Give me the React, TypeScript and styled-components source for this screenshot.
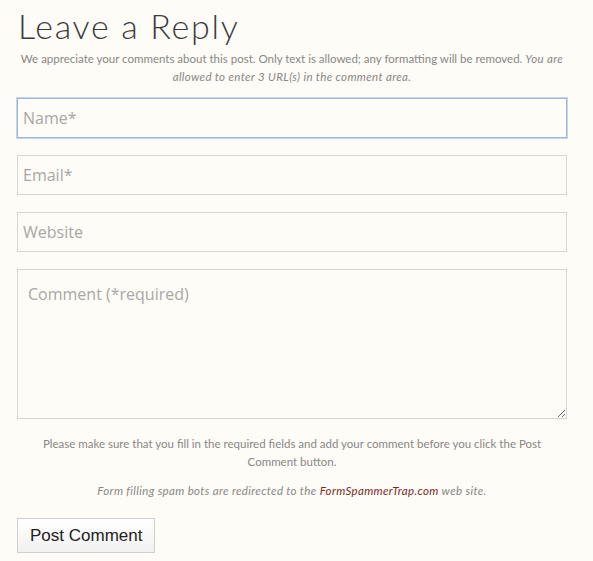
import React from "react";
import styled, { createGlobalStyle } from "styled-components";

const Global = createGlobalStyle`
  html, body { margin: 0; padding: 0; background: #fdfcf7; }
  body { font-family: Lato, "Open Sans", sans-serif; }
`;

const Wrap = styled.div`
  width: 550px;
  padding: 6px 0 0 17px;
  display: flex;
  flex-direction: column;
`;

const Title = styled.h3`
  margin: 0 0 0 1px;
  font-family: Lato, sans-serif;
  font-weight: 300;
  font-size: 34px;
  line-height: 40px;
  color: #3d3a3c;
  letter-spacing: 1.7px;
`;

const Note = styled.p<{ $mt?: number }>`
  margin: ${(p) => p.$mt ?? 0}px 0 0;
  font-family: Lato, sans-serif;
  font-size: 11.5px;
  line-height: 18px;
  color: #8a8784;
  text-align: center;
`;

const Em = styled.em`
  font-style: italic;
  letter-spacing: 0.35px;
`;

const Link = styled.a`
  color: #7a2b1f;
  text-decoration: none;
`;

const Fields = styled.div`
  display: flex;
  flex-direction: column;
  gap: 17px;
  margin-top: 12px;
`;

const Input = styled.input<{ $active?: boolean }>`
  box-sizing: border-box;
  width: 550px;
  height: 40px;
  padding: 0 5px;
  border: 1px solid ${(p) => (p.$active ? "#9fb6dd" : "#d8d6d2")};
  box-shadow: ${(p) => (p.$active ? "0 0 0 1px #c6d4ec" : "none")};
  background: #fdfcf7;
  font-family: "Open Sans", sans-serif;
  font-size: 16px;
  color: #555;
  outline: none;
  &::placeholder { color: #a9a7a4; }
`;

const Area = styled.textarea`
  box-sizing: border-box;
  width: 550px;
  height: 150px;
  padding: 13px 10px;
  border: 1px solid #d8d6d2;
  background: #fdfcf7;
  font-family: "Open Sans", sans-serif;
  font-size: 16px;
  color: #555;
  outline: none;
  resize: vertical;
  display: block;
  &::placeholder { color: #a9a7a4; }
`;

const Button = styled.button`
  align-self: flex-start;
  margin-top: 18px;
  height: 35px;
  padding: 0 12px;
  border: 1px solid #cfcfcf;
  background: linear-gradient(#ffffff, #f1f1f1);
  font-family: "Liberation Sans", Arial, sans-serif;
  font-size: 17px;
  color: #222;
`;

export default function App() {
  return (
    <>
      <Global />
      <Wrap>
        <Title>Leave a Reply</Title>
        <Note $mt={4}>
          We appreciate your comments about this post. Only text is allowed; any formatting will be removed.{" "}
          <Em>You are allowed to enter 3 URL(s) in the comment area.</Em>
        </Note>
        <Fields>
          <Input $active placeholder="Name*" />
          <Input placeholder="Email*" />
          <Input placeholder="Website" />
          <Area placeholder="Comment (*required)" />
        </Fields>
        <Note $mt={16}>
          Please make sure that you fill in the required fields and add your comment before you click the Post Comment button.
        </Note>
        <Note $mt={11}>
          <Em>
            Form filling spam bots are redirected to the <Link href="#">FormSpammerTrap.com</Link> web site.
          </Em>
        </Note>
        <Button>Post Comment</Button>
      </Wrap>
    </>
  );
}
